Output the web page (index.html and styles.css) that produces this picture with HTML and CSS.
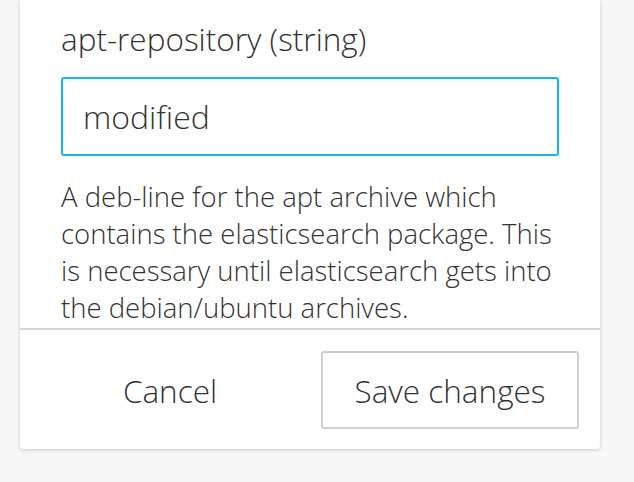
FILE: index.html
```html
<!DOCTYPE html>
<html>
<head>
<meta charset="utf-8">
<link rel="stylesheet" href="styles.css">
</head>
<body>
<div class="panel">
  <div class="panel-body">
    <label class="field-label">apt-repository (string)</label>
    <div class="field-input">modified</div>
    <p class="field-help">A deb-line for the apt archive which contains the elasticsearch package. This is necessary until elasticsearch gets into the debian/ubuntu archives.</p>
  </div>
  <div class="panel-footer">
    <button class="btn btn-plain">Cancel</button>
    <button class="btn btn-outline">Save changes</button>
  </div>
</div>
</body>
</html>
```
FILE: styles.css
```css
html, body {
  margin: 0;
  padding: 0;
  background: #f7f7f7;
  height: 100%;
  overflow: hidden;
}
body {
  font-family: "Open Sans", "Noto Sans", sans-serif;
  font-weight: 300;
  color: #333;
}
.panel {
  margin-left: 20px;
  width: 580px;
  background: #fff;
  border-radius: 0 0 4px 4px;
  box-shadow: 0 1px 4px rgba(0,0,0,0.18);
}
.panel-body {
  height: 328px;
  overflow: hidden;
  padding: 20px 41px 0;
  box-sizing: border-box;
}
.field-label {
  display: block;
  font-size: 31.5px;
  line-height: 38px;
}
.field-input {
  margin-top: 19px;
  height: 79px;
  box-sizing: border-box;
  border: 2px solid #19b6ee;
  border-radius: 3px;
  padding: 0 20px;
  font-size: 32px;
  line-height: 75px;
  box-shadow: inset 0 2px 3px rgba(0,0,0,0.06);
}
.field-help {
  margin: 22px 0 0;
  font-size: 27.5px;
  line-height: 37px;
  color: #333;
}
.panel-footer {
  border-top: 2px solid #d4d4d4;
  display: flex;
  gap: 22px;
  padding: 21px 21px 20px;
}
.btn {
  flex: 1;
  height: 78px;
  font-family: inherit;
  font-weight: 300;
  font-size: 31.5px;
  color: #333;
  background: #fff;
  border-radius: 3px;
  cursor: pointer;
}
.btn-plain {
  border: 2px solid transparent;
}
.btn-outline {
  border: 2px solid #d0d0d0;
}
```
